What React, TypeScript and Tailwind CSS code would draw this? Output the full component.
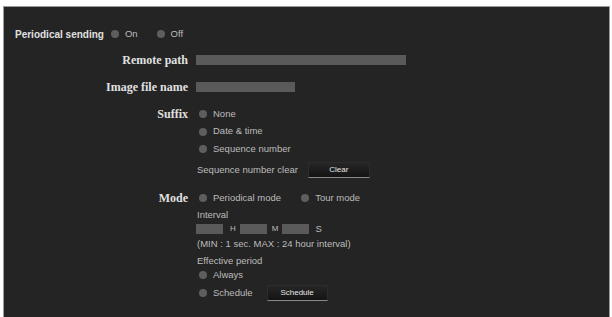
const sans = { fontFamily: '"Liberation Sans", Arial, sans-serif' };

const Radio = () => (
  <span className="ml-[3px] mr-[6px] inline-block h-[8px] w-[8px] shrink-0 rounded-full bg-[#5e5e5e]" />
);

const Field = ({ w }: { w: string }) => <span className={`inline-block h-[10px] bg-[#5a5a5a] ${w}`} />;

const Btn = ({ label, w }: { label: string; w: string }) => (
  <span
    className={`inline-flex h-[16px] items-center justify-center border border-[#2c2c2c] border-b-[#8a8a8a] bg-gradient-to-b from-[#262626] to-[#141414] text-[8px] text-[#e6e6e6] ${w}`}
  >
    {label}
  </span>
);

const Row = ({ label, h, mt, children }: { label?: string; h: string; mt: string; children?: React.ReactNode }) => (
  <div className={`flex items-center ${h} ${mt}`}>
    <div
      className="w-[184px] shrink-0 text-right text-[12px] font-bold text-[#e0e0e0]"
      style={{ fontFamily: '"Liberation Serif", "Times New Roman", serif' }}
    >
      {label}
    </div>
    <div className="ml-[8px] flex items-center text-[9.5px] text-[#bcbcbc]">{children}</div>
  </div>
);

export default function App() {
  return (
    <div className="h-[317px] w-[612px] overflow-hidden bg-white pt-[6px] pl-[3px]" style={sans}>
      <div className="h-[311px] w-[607px] border border-b-0 border-[#9a9a9a] bg-[#242424]">
        <div className="mt-[18px] flex h-[18px] items-center pl-[11px] text-[9.5px] text-[#bcbcbc]">
          <span className="mr-[4px] text-[10px] font-bold text-[#e0e0e0]">Periodical sending</span>
          <Radio />
          <span className="mr-[16px]">On</span>
          <Radio />
          <span>Off</span>
        </div>

        <Row label="Remote path" h="h-[18px]" mt="mt-[8px]">
          <Field w="w-[210px]" />
        </Row>
        <Row label="Image file name" h="h-[18px]" mt="mt-[9px]">
          <Field w="w-[99px]" />
        </Row>

        <Row label="Suffix" h="h-[18px]" mt="mt-[9px]">
          <Radio />
          <span>None</span>
        </Row>
        <Row h="h-[17px]" mt="mt-0">
          <Radio />
          <span>Date &amp; time</span>
        </Row>
        <Row h="h-[18px]" mt="mt-0">
          <Radio />
          <span>Sequence number</span>
        </Row>
        <Row h="h-[16px]" mt="mt-[4px]">
          <span className="ml-[1px] mr-[10px]">Sequence number clear</span>
          <Btn label="Clear" w="w-[62px]" />
        </Row>

        <Row label="Mode" h="h-[18px]" mt="mt-[11px]">
          <Radio />
          <span className="mr-[17px]">Periodical mode</span>
          <Radio />
          <span>Tour mode</span>
        </Row>
        <Row h="h-[14px]" mt="mt-[1px]">
          <span className="ml-[1px]">Interval</span>
        </Row>
        <Row h="h-[14px]" mt="mt-0">
          <Field w="w-[27px]" />
          <span className="ml-[7px] mr-[4px] text-[8px]">H</span>
          <Field w="w-[27px]" />
          <span className="ml-[5px] mr-[4px] text-[8px]">M</span>
          <Field w="w-[27px]" />
          <span className="ml-[6px]">S</span>
        </Row>
        <Row h="h-[14px]" mt="mt-[1px]">
          <span className="ml-[1px]">(MIN : 1 sec. MAX : 24 hour interval)</span>
        </Row>
        <Row h="h-[14px]" mt="mt-[3px]">
          <span className="ml-[1px]">Effective period</span>
        </Row>
        <Row h="h-[14px]" mt="mt-0">
          <Radio />
          <span>Always</span>
        </Row>
        <Row h="h-[16px]" mt="mt-[3px]">
          <Radio />
          <span className="mr-[14px]">Schedule</span>
          <Btn label="Schedule" w="w-[61px]" />
        </Row>
      </div>
    </div>
  );
}
